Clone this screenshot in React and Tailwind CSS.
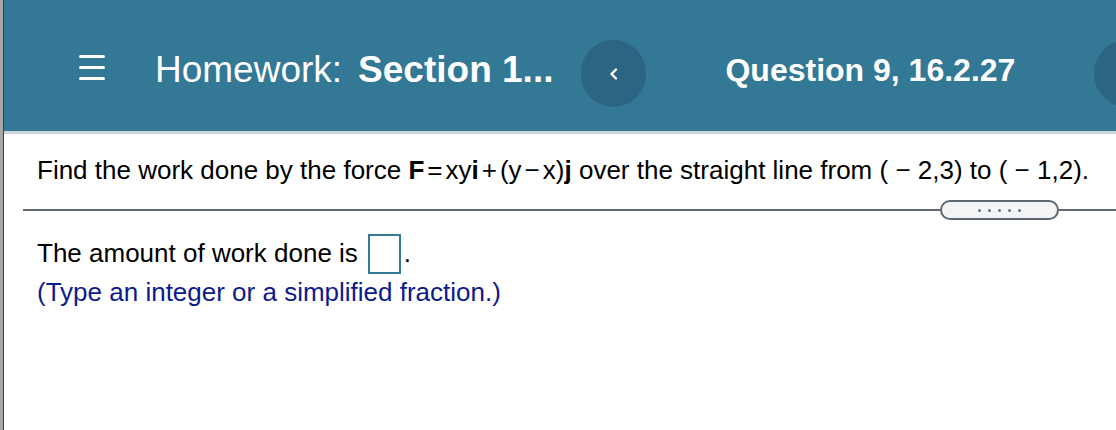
import React from "react";

const T = () => <span className="inline-block w-[3px]" />;

export default function App() {
  return (
    <div className="flex w-[1116px] h-[430px] overflow-hidden bg-white" style={{ fontFamily: '"Liberation Sans", Arial, sans-serif' }}>
      <div className="w-[3px] shrink-0 bg-[#a8a8a8]" />
      <div className="w-px shrink-0 bg-[#3c3c3c]" />
      <div className="flex-1 flex flex-col min-w-0">
        <header className="h-[134px] shrink-0 bg-[#337895] border-b-[3px] border-[#cdd4da] flex items-start text-white">
          <div className="ml-[75px] mt-[55px] flex flex-col gap-[8px] w-[26px]">
            <span className="block h-[3px] rounded-full bg-white" />
            <span className="block h-[3px] rounded-full bg-white" />
            <span className="block h-[3px] rounded-full bg-white" />
          </div>
          <div className="ml-[50px] mt-[51px] text-[37px] leading-none whitespace-nowrap">
            Homework:<span className="font-bold ml-[16px]">Section 1...</span>
          </div>
          <div className="ml-[28px] mt-[40px] w-[65px] h-[67px] rounded-full bg-[#2c6583] flex items-center justify-center shrink-0">
            <svg width="12" height="16" viewBox="0 0 12 16">
              <path d="M8 3.5 L3.5 8 L8 12.5" fill="none" stroke="white" strokeWidth="2.4" strokeLinecap="round" strokeLinejoin="round" />
            </svg>
          </div>
          <div className="ml-[79px] mt-[54px] text-[32px] font-bold leading-none whitespace-nowrap">Question 9, 16.2.27</div>
          <div className="ml-auto -mr-[44px] mt-[40px] w-[66px] h-[67px] rounded-full bg-[#2c6583] shrink-0" />
        </header>
        <div className="pt-[21px] pl-[33px] text-[26px] leading-[30px] text-black whitespace-nowrap">
          Find the work done by the force <b>F</b><T />=<T />xy<b>i</b><T />+<T />(y<T />−<T />x)<b>j</b> over the straight line from ( − 2,3) to ( − 1,2).
        </div>
        <div className="relative mt-[15px] ml-[19px] h-[20px] flex items-center">
          <div className="flex-1 h-[2px] bg-[#5d6873]" />
          <div className="absolute left-[917px] top-0 w-[119px] h-[20px] rounded-full border-2 border-[#5d6873] bg-[#f3f4f6] flex items-center justify-center gap-[7px]">
            {[0, 1, 2, 3, 4].map((i) => (
              <span key={i} className="block w-[3px] h-[3px] rounded-full bg-[#6b7280]" />
            ))}
          </div>
        </div>
        <div className="pl-[33px] mt-[14px] flex items-end text-[26px] text-black">
          <span className="leading-[30px] mb-[6px] whitespace-nowrap">The amount of work done is</span>
          <span className="ml-[10px] w-[33px] h-[40px] border-2 border-[#357997] inline-block shrink-0" />
          <span className="leading-[30px] mb-[6px] ml-[3px]">.</span>
        </div>
        <div className="pl-[33px] mt-[3px] text-[26px] leading-[30px] text-[#0d1a8c] whitespace-nowrap">
          (Type an integer or a simplified fraction.)
        </div>
      </div>
    </div>
  );
}
